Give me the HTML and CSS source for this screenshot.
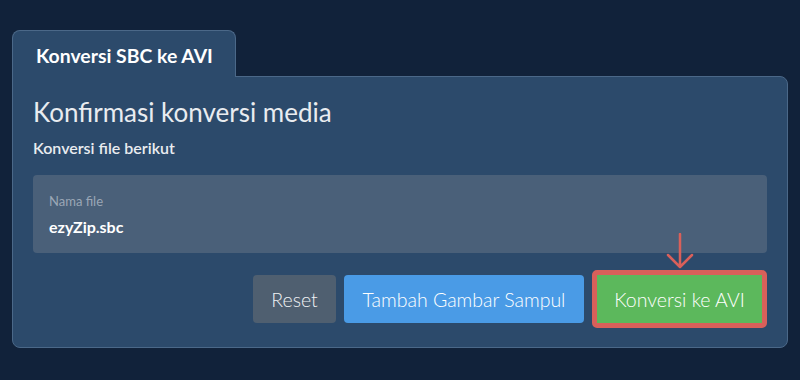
FILE: index.html
```html
<!DOCTYPE html>
<html lang="id">
<head>
    <meta charset="UTF-8">
    <meta name="viewport" content="width=device-width, initial-scale=1.0">
    <title>Konversi SBC ke AVI</title>
    <link rel="stylesheet" href="styles.css">
</head>
<body>
    <div class="page">
        <div class="tabs">
            <div class="tab active">Konversi SBC ke AVI</div>
        </div>
        <div class="panel">
            <h2 class="title">Konfirmasi konversi media</h2>
            <p class="subtitle">Konversi file berikut</p>
            <div class="file-box">
                <span class="file-label">Nama file</span>
                <span class="file-name">ezyZip.sbc</span>
            </div>
            <div class="actions">
                <button class="btn btn-reset">Reset</button>
                <button class="btn btn-cover">Tambah Gambar Sampul</button>
                <div class="highlight">
                    <svg class="arrow" width="30" height="36" viewBox="0 0 30 36">
                        <path d="M15 1 V33 M3 22 L15 34 L27 22" fill="none" stroke="#d9605a" stroke-width="2.5" stroke-linecap="round" stroke-linejoin="round"/>
                    </svg>
                    <button class="btn btn-convert">Konversi ke AVI</button>
                </div>
            </div>
        </div>
    </div>
</body>
</html>
```

FILE: styles.css
```css
body, html {
    margin: 0;
    padding: 0;
    height: 100%;
}

body {
    background-color: #11223a;
    font-family: Lato, "Noto Sans", sans-serif;
    color: #eef1f5;
}

.page {
    padding: 30px 12px 0 12px;
}

.tabs {
    display: flex;
}

.tab {
    width: 224px;
    box-sizing: border-box;
    height: 47px;
    padding: 13px 0 0 23px;
    background-color: #2c4a6b;
    border: 1px solid #4b6888;
    border-bottom: none;
    border-radius: 8px 8px 0 0;
    font-size: 19.4px;
    font-weight: 700;
    color: #ffffff;
    margin-bottom: -1px;
    position: relative;
    z-index: 1;
}

.panel {
    background-color: #2c4a6b;
    border: 1px solid #4b6888;
    border-radius: 0 8px 8px 8px;
    padding: 0 20px 0 20px;
    height: 272px;
    box-sizing: border-box;
}

.title {
    margin: 0;
    padding-top: 19px;
    font-size: 26px;
    font-weight: 400;
    color: #e9ecf0;
    line-height: 32px;
}

.subtitle {
    margin: 10px 0 0 0;
    font-size: 16px;
    font-weight: 600;
    color: #e9ecf0;
    line-height: 20px;
}

.file-box {
    margin-top: 17px;
    height: 78px;
    box-sizing: border-box;
    background-color: #4a6079;
    border-radius: 4px;
    padding: 18px 16px 0 16px;
    display: flex;
    flex-direction: column;
}

.file-label {
    font-size: 13px;
    color: #9ba7b6;
    line-height: 16px;
}

.file-name {
    margin-top: 8px;
    font-size: 16px;
    font-weight: 700;
    color: #ffffff;
    line-height: 20px;
}

.actions {
    display: flex;
    justify-content: flex-end;
    align-items: center;
    gap: 8px;
    margin-top: 17px;
}

.btn {
    height: 48px;
    border: none;
    border-radius: 4px;
    font-family: Lato, "Noto Sans", sans-serif;
    font-size: 19.5px;
    font-weight: 300;
    color: #ffffff;
    padding: 0;
}

.btn-reset {
    width: 83px;
    background-color: #4f5f70;
    color: #f0f2f5;
}

.btn-cover {
    width: 240px;
    background-color: #4a9be6;
}

.highlight {
    position: relative;
    border: 5px solid #d9605a;
    border-radius: 5px;
    display: flex;
}

.btn-convert {
    width: 165px;
    background-color: #5cb85c;
    border-radius: 0;
}

.arrow {
    position: absolute;
    left: 68px;
    top: -42px;
}
```
